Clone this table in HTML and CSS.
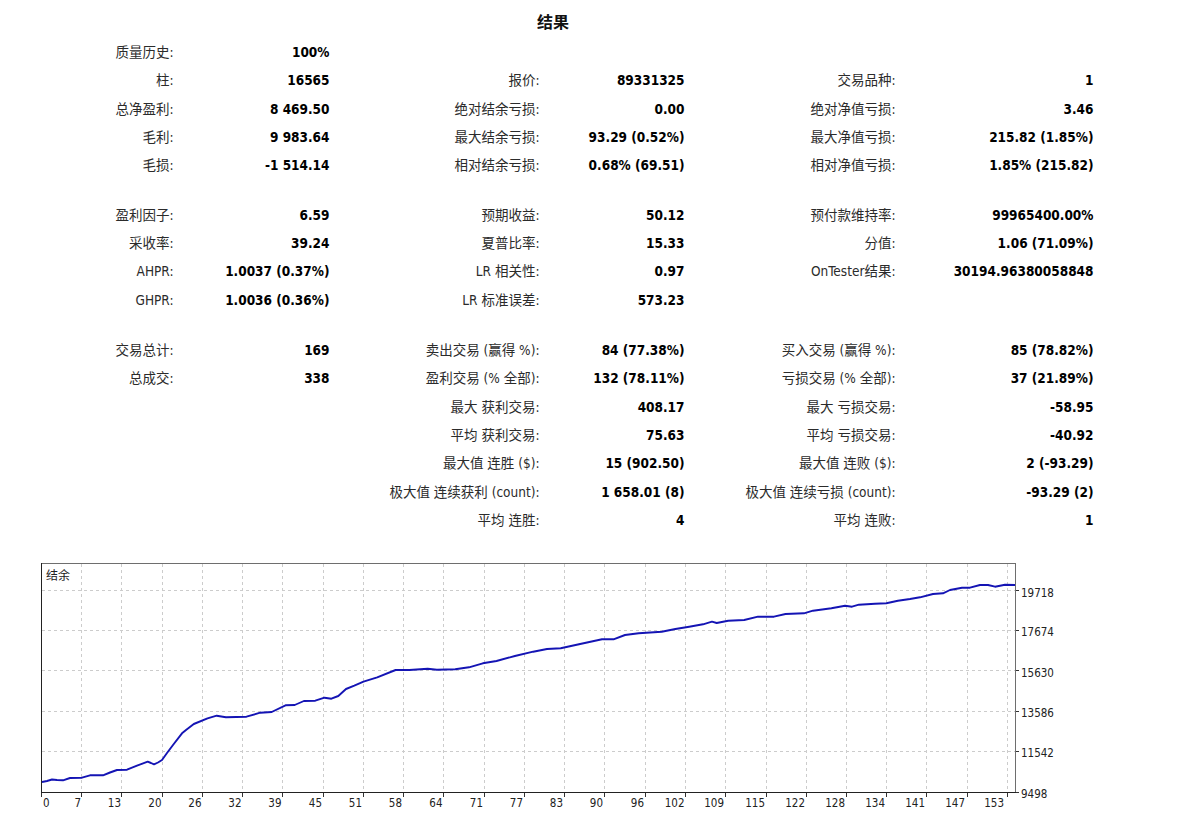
FILE: index.html
```html
<!DOCTYPE html>
<html lang="zh-CN">
<head>
<meta charset="utf-8">
<title>结果</title>
<link rel="stylesheet" href="styles.css">
</head>
<body>
<div class="report">
  <h1 class="title">结果</h1>
  <div class="stats">
    <span class="lbl">质量历史:</span><span class="val">100%</span><span></span><span></span><span></span><span></span>
    <span class="lbl">柱:</span><span class="val">16565</span><span class="lbl">报价:</span><span class="val">89331325</span><span class="lbl">交易品种:</span><span class="val">1</span>
    <span class="lbl">总净盈利:</span><span class="val">8 469.50</span><span class="lbl">绝对结余亏损:</span><span class="val">0.00</span><span class="lbl">绝对净值亏损:</span><span class="val">3.46</span>
    <span class="lbl">毛利:</span><span class="val">9 983.64</span><span class="lbl">最大结余亏损:</span><span class="val">93.29 (0.52%)</span><span class="lbl">最大净值亏损:</span><span class="val">215.82 (1.85%)</span>
    <span class="lbl">毛损:</span><span class="val">-1 514.14</span><span class="lbl">相对结余亏损:</span><span class="val">0.68% (69.51)</span><span class="lbl">相对净值亏损:</span><span class="val">1.85% (215.82)</span>
    <div class="gap g1"></div>
    <span class="lbl">盈利因子:</span><span class="val">6.59</span><span class="lbl">预期收益:</span><span class="val">50.12</span><span class="lbl">预付款维持率:</span><span class="val">99965400.00%</span>
    <span class="lbl">采收率:</span><span class="val">39.24</span><span class="lbl">夏普比率:</span><span class="val">15.33</span><span class="lbl">分值:</span><span class="val">1.06 (71.09%)</span>
    <span class="lbl">AHPR:</span><span class="val">1.0037 (0.37%)</span><span class="lbl">LR 相关性:</span><span class="val">0.97</span><span class="lbl">OnTester结果:</span><span class="val">30194.96380058848</span>
    <span class="lbl">GHPR:</span><span class="val">1.0036 (0.36%)</span><span class="lbl">LR 标准误差:</span><span class="val">573.23</span><span></span><span></span>
    <div class="gap g2"></div>
    <span class="lbl">交易总计:</span><span class="val">169</span><span class="lbl">卖出交易 (赢得 %):</span><span class="val">84 (77.38%)</span><span class="lbl">买入交易 (赢得 %):</span><span class="val">85 (78.82%)</span>
    <span class="lbl">总成交:</span><span class="val">338</span><span class="lbl">盈利交易 (% 全部):</span><span class="val">132 (78.11%)</span><span class="lbl">亏损交易 (% 全部):</span><span class="val">37 (21.89%)</span>
    <span></span><span></span><span class="lbl">最大 获利交易:</span><span class="val">408.17</span><span class="lbl">最大 亏损交易:</span><span class="val">-58.95</span>
    <span></span><span></span><span class="lbl">平均 获利交易:</span><span class="val">75.63</span><span class="lbl">平均 亏损交易:</span><span class="val">-40.92</span>
    <span></span><span></span><span class="lbl">最大值 连胜 ($):</span><span class="val">15 (902.50)</span><span class="lbl">最大值 连败 ($):</span><span class="val">2 (-93.29)</span>
    <span></span><span></span><span class="lbl">极大值 连续获利 (count):</span><span class="val">1 658.01 (8)</span><span class="lbl">极大值 连续亏损 (count):</span><span class="val">-93.29 (2)</span>
    <span></span><span></span><span class="lbl">平均 连胜:</span><span class="val">4</span><span class="lbl">平均 连败:</span><span class="val">1</span>
  </div>
  <svg class="chart" width="1200" height="295" viewBox="0 540 1200 295" xmlns="http://www.w3.org/2000/svg">
    <g class="grid">
      <line x1="42" y1="590.5" x2="1015" y2="590.5"/>
      <line x1="42" y1="630.5" x2="1015" y2="630.5"/>
      <line x1="42" y1="670.5" x2="1015" y2="670.5"/>
      <line x1="42" y1="711.5" x2="1015" y2="711.5"/>
      <line x1="42" y1="751.5" x2="1015" y2="751.5"/>
      <line x1="81.5" y1="564" x2="81.5" y2="792"/>
      <line x1="121.5" y1="564" x2="121.5" y2="792"/>
      <line x1="162.5" y1="564" x2="162.5" y2="792"/>
      <line x1="202.5" y1="564" x2="202.5" y2="792"/>
      <line x1="242.5" y1="564" x2="242.5" y2="792"/>
      <line x1="282.5" y1="564" x2="282.5" y2="792"/>
      <line x1="323.5" y1="564" x2="323.5" y2="792"/>
      <line x1="363.5" y1="564" x2="363.5" y2="792"/>
      <line x1="403.5" y1="564" x2="403.5" y2="792"/>
      <line x1="443.5" y1="564" x2="443.5" y2="792"/>
      <line x1="484.5" y1="564" x2="484.5" y2="792"/>
      <line x1="524.5" y1="564" x2="524.5" y2="792"/>
      <line x1="564.5" y1="564" x2="564.5" y2="792"/>
      <line x1="604.5" y1="564" x2="604.5" y2="792"/>
      <line x1="645.5" y1="564" x2="645.5" y2="792"/>
      <line x1="685.5" y1="564" x2="685.5" y2="792"/>
      <line x1="725.5" y1="564" x2="725.5" y2="792"/>
      <line x1="766.5" y1="564" x2="766.5" y2="792"/>
      <line x1="806.5" y1="564" x2="806.5" y2="792"/>
      <line x1="846.5" y1="564" x2="846.5" y2="792"/>
      <line x1="886.5" y1="564" x2="886.5" y2="792"/>
      <line x1="926.5" y1="564" x2="926.5" y2="792"/>
      <line x1="967.5" y1="564" x2="967.5" y2="792"/>
      <line x1="1007.5" y1="564" x2="1007.5" y2="792"/>
    </g>
    <g class="ticks">
      <line x1="1015" y1="590.5" x2="1019" y2="590.5"/>
      <line x1="1015" y1="630.5" x2="1019" y2="630.5"/>
      <line x1="1015" y1="670.5" x2="1019" y2="670.5"/>
      <line x1="1015" y1="711.5" x2="1019" y2="711.5"/>
      <line x1="1015" y1="751.5" x2="1019" y2="751.5"/>
      <line x1="1015" y1="792.5" x2="1019" y2="792.5"/>
      <line x1="41.5" y1="792" x2="41.5" y2="797"/>
      <line x1="81.5" y1="792" x2="81.5" y2="797"/>
      <line x1="121.5" y1="792" x2="121.5" y2="797"/>
      <line x1="162.5" y1="792" x2="162.5" y2="797"/>
      <line x1="202.5" y1="792" x2="202.5" y2="797"/>
      <line x1="242.5" y1="792" x2="242.5" y2="797"/>
      <line x1="282.5" y1="792" x2="282.5" y2="797"/>
      <line x1="323.5" y1="792" x2="323.5" y2="797"/>
      <line x1="363.5" y1="792" x2="363.5" y2="797"/>
      <line x1="403.5" y1="792" x2="403.5" y2="797"/>
      <line x1="443.5" y1="792" x2="443.5" y2="797"/>
      <line x1="484.5" y1="792" x2="484.5" y2="797"/>
      <line x1="524.5" y1="792" x2="524.5" y2="797"/>
      <line x1="564.5" y1="792" x2="564.5" y2="797"/>
      <line x1="604.5" y1="792" x2="604.5" y2="797"/>
      <line x1="645.5" y1="792" x2="645.5" y2="797"/>
      <line x1="685.5" y1="792" x2="685.5" y2="797"/>
      <line x1="725.5" y1="792" x2="725.5" y2="797"/>
      <line x1="766.5" y1="792" x2="766.5" y2="797"/>
      <line x1="806.5" y1="792" x2="806.5" y2="797"/>
      <line x1="846.5" y1="792" x2="846.5" y2="797"/>
      <line x1="886.5" y1="792" x2="886.5" y2="797"/>
      <line x1="926.5" y1="792" x2="926.5" y2="797"/>
      <line x1="967.5" y1="792" x2="967.5" y2="797"/>
      <line x1="1007.5" y1="792" x2="1007.5" y2="797"/>
    </g>
    <line class="frame-light" x1="41" y1="563.5" x2="1015.5" y2="563.5"/>
    <line class="frame-light" x1="1015.5" y1="563" x2="1015.5" y2="793"/>
    <line class="frame-dark" x1="41.5" y1="563" x2="41.5" y2="793"/>
    <line class="frame-dark" x1="41" y1="792.5" x2="1016" y2="792.5"/>
    <polyline class="curve" points="42,782 47,781 52,779.5 57,780 63,780.3 70,778 82,777.7 90,775.3 103,775.3 110,772.5 117,770 127,769.7 137,765.7 147.7,761.7 151,763 154,764.3 158,762.5 162,760 167,753 173,745 182,733.3 186,730 193.8,724 207.5,718.3 216.7,715.7 225.9,717.3 246.5,716.7 260.3,712.7 271.7,712 285.5,705.3 294.7,705 303.9,701 315.3,700.7 324.5,697.7 331.4,698.7 338.3,696 346,689 354.3,685.7 363.5,681.7 377.2,677.3 395.6,670 409.4,670 427.7,668.7 436.9,669.7 455.2,669.3 469,667.3 482.8,663.3 496.5,661 514.9,656 533.2,651.7 547,649 560.7,648.3 579,644.3 602,639.3 613.5,639.3 625,635 638.7,633.3 661.7,631.7 675.4,629 689.2,626.7 703,624.3 712,621.7 716.7,623 728.2,620.7 744.2,620 758,616.7 774,616.7 785.5,614 803.9,613.3 813,610.7 831.4,608.3 845.1,605.7 852,606.7 858.9,604.7 875,603.7 886.4,603.3 897.9,600.7 910,599 920,597.3 933,594 943,593.3 950,590 962,587.7 970,587.7 980,585 988,585 995,586.7 1000,585.7 1005,584.7 1015,585"/>
    <text class="caption" x="46" y="580">结余</text>
    <g class="ylabels">
      <text x="1021" y="596.5">19718</text>
      <text x="1021" y="636">17674</text>
      <text x="1021" y="676.5">15630</text>
      <text x="1021" y="717">13586</text>
      <text x="1021" y="757">11542</text>
      <text x="1021" y="797.5">9498</text>
    </g>
    <g class="xlabels">
      <text x="43" y="807" class="start">0</text>
      <text x="81">7</text>
      <text x="121">13</text>
      <text x="161.5">20</text>
      <text x="201.5">26</text>
      <text x="241.5">32</text>
      <text x="281.5">39</text>
      <text x="322">45</text>
      <text x="362">51</text>
      <text x="402">58</text>
      <text x="442.5">64</text>
      <text x="483">71</text>
      <text x="523">77</text>
      <text x="563">83</text>
      <text x="603">90</text>
      <text x="644">96</text>
      <text x="684.5">102</text>
      <text x="724">109</text>
      <text x="765">115</text>
      <text x="805">122</text>
      <text x="845">128</text>
      <text x="885">134</text>
      <text x="925">141</text>
      <text x="965">147</text>
      <text x="1004">153</text>
    </g>
  </svg>
</div>
</body>
</html>
```
FILE: styles.css
```css
html, body {
  margin: 0;
  padding: 0;
  background: #ffffff;
}

.report {
  width: 1200px;
  font-family: "DejaVu Sans Condensed", "DejaVu Sans", "Noto Sans CJK SC", sans-serif;
  color: #000;
}

.title {
  box-sizing: border-box;
  width: 1106px;
  height: 38px;
  margin: 0;
  padding-top: 8px;
  font-family: "Noto Sans CJK SC", sans-serif;
  font-size: 16px;
  line-height: 26px;
  font-weight: 700;
  text-align: center;
  color: #111;
}

.stats {
  display: grid;
  grid-template-columns: 173.5px 156px 210px 145px 211px 198px;
  align-content: start;
  height: 502px;
  font-size: 13.5px;
}

.stats > span {
  display: block;
  line-height: 28.35px;
  white-space: nowrap;
  text-align: right;
}

.lbl {
  color: #2b2b2b;
}

.val {
  font-weight: 700;
  color: #000;
}

.gap {
  grid-column: 1 / -1;
}

.g1 {
  height: 21px;
}

.g2 {
  height: 22px;
}

.chart {
  display: block;
}

.grid line {
  stroke: #cccccc;
  stroke-width: 1;
  stroke-dasharray: 3 3;
  shape-rendering: crispEdges;
}

.ticks line {
  stroke: #333;
  stroke-width: 1;
  shape-rendering: crispEdges;
}

.frame-light {
  stroke: #6e6e6e;
  stroke-width: 1;
  shape-rendering: crispEdges;
}

.frame-dark {
  stroke: #222;
  stroke-width: 1;
  shape-rendering: crispEdges;
}

.curve {
  fill: none;
  stroke: #1414b4;
  stroke-width: 1.9;
  stroke-linejoin: round;
}

.caption {
  font-family: "Noto Sans CJK SC", sans-serif;
  font-size: 12px;
  fill: #222;
}

.ylabels text,
.xlabels text {
  font-family: "DejaVu Sans Condensed", "DejaVu Sans", sans-serif;
  font-size: 11.5px;
  fill: #222;
}

.xlabels text {
  text-anchor: end;
}

.xlabels text:not(.start) {
  transform: translateY(807px);
}

.xlabels text.start {
  text-anchor: start;
}
```
